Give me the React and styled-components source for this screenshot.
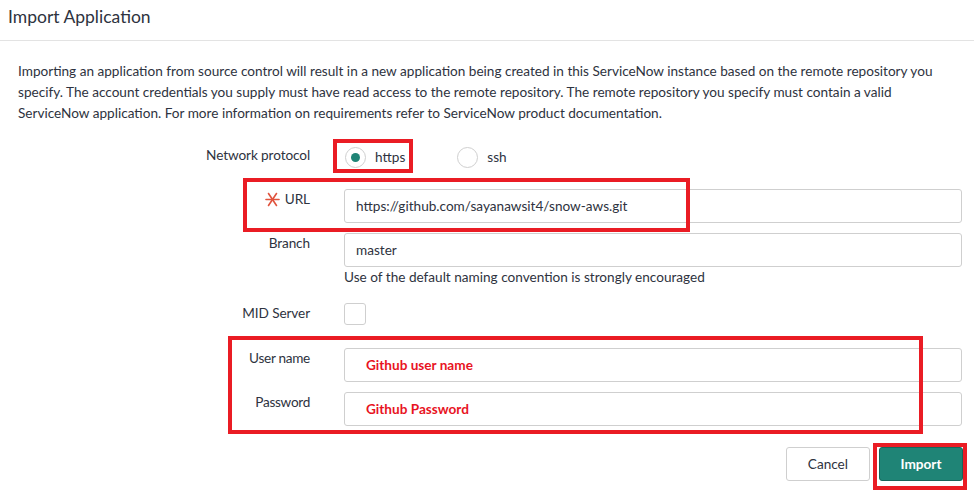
import { createGlobalStyle, styled } from 'styled-components';

const GlobalStyle = createGlobalStyle`
  body {
    margin: 0;
    background: #fff;
    font-family: Lato, "Noto Sans", sans-serif;
    color: #2e3340;
  }
`;

const ANNOTATIONS = [
  { left: 333, top: 139, width: 80, height: 34 },
  { left: 243, top: 178, width: 447, height: 54 },
  { left: 228, top: 336, width: 695, height: 98 },
  { left: 873, top: 443, width: 94, height: 47 },
];

const Asterisk = () => (
  <svg width="15" height="15" viewBox="0 0 15 15">
    <g stroke="#e0533d" strokeWidth="1.6" strokeLinecap="round">
      <line x1="1" y1="7.5" x2="14" y2="7.5" />
      <line x1="3.5" y1="1.5" x2="11.5" y2="13.5" />
      <line x1="11.5" y1="1.5" x2="3.5" y2="13.5" />
    </g>
  </svg>
);

const App = () => (
  <Page>
    <GlobalStyle />
    <Header>Import Application</Header>
    <Body>
      <Intro>
        Importing an application from source control will result in a new application being created in this
        ServiceNow instance based on the remote repository you specify. The account credentials you supply must
        have read access to the remote repository. The remote repository you specify must contain a valid
        ServiceNow application. For more information on requirements refer to ServiceNow product documentation.
      </Intro>

      <Form>
        <Row $top={21}>
          <Label>Network protocol</Label>
          <RadioGroup>
            <RadioOption>
              <Radio $checked />
              https
            </RadioOption>
            <RadioOption>
              <Radio />
              ssh
            </RadioOption>
          </RadioGroup>
        </Row>

        <Row $top={20}>
          <Label>
            <Asterisk />
            URL
          </Label>
          <Field>
            <TextInput>https://github.com/sayanawsit4/snow-aws.git</TextInput>
          </Field>
        </Row>

        <Row $top={10}>
          <Label>Branch</Label>
          <Field>
            <TextInput>master</TextInput>
            <Hint>Use of the default naming convention is strongly encouraged</Hint>
          </Field>
        </Row>

        <Row $top={15}>
          <Label>MID Server</Label>
          <Checkbox />
        </Row>

        <Row $top={23}>
          <Label $narrow>User name</Label>
          <Field>
            <TextInput $annotated>Github user name</TextInput>
          </Field>
        </Row>

        <Row $top={10}>
          <Label $narrow>Password</Label>
          <Field>
            <TextInput $annotated>Github Password</TextInput>
          </Field>
        </Row>
      </Form>

      <Actions>
        <Button>Cancel</Button>
        <Button $primary>Import</Button>
      </Actions>
    </Body>

    {ANNOTATIONS.map((box, index) => (
      <Annotation key={index} style={box} />
    ))}
  </Page>
);

const Page = styled.div`
  position: relative;
  width: 974px;
  height: 497px;
  overflow: hidden;
`;

const Header = styled.h1`
  margin: 0;
  height: 41px;
  padding: 6px 8px 0;
  box-sizing: border-box;
  border-bottom: 1px solid #e3e3e3;
  font-size: 17.5px;
  font-weight: 400;
  color: #2e3340;
`;

const Body = styled.div`
  padding: 20px 12px 0 18px;
`;

const Intro = styled.p`
  margin: 0;
  width: 945px;
  font-size: 13.6px;
  line-height: 21px;
  color: #2e3340;
`;

const Form = styled.div`
  display: flex;
  flex-direction: column;
`;

const Row = styled.div`
  display: flex;
  align-items: flex-start;
  margin-top: ${({ $top }) => $top}px;
`;

const Label = styled.div`
  flex: 0 0 292px;
  display: flex;
  align-items: center;
  justify-content: flex-end;
  gap: 5px;
  font-size: 13.6px;
  line-height: 20px;
  color: #2e3340;
  letter-spacing: ${({ $narrow }) => ($narrow ? '-0.3px' : '-0.1px')};
`;

const Field = styled.div`
  flex: 0 0 618px;
  margin-left: 34px;
  display: flex;
  flex-direction: column;
`;

const TextInput = styled.div`
  height: 34px;
  box-sizing: border-box;
  border: 1px solid #cfcfcf;
  border-radius: 3px;
  padding-left: ${({ $annotated }) => ($annotated ? '21px' : '11px')};
  padding-top: 7px;
  font-size: 13.6px;
  font-weight: ${({ $annotated }) => ($annotated ? 700 : 400)};
  color: ${({ $annotated }) => ($annotated ? '#e8141f' : '#2e3340')};
  line-height: 18px;
`;

const Hint = styled.div`
  font-size: 13.6px;
  line-height: 21px;
  color: #2e3340;
`;

const RadioGroup = styled.div`
  display: flex;
  gap: 51px;
  margin-left: 34px;
`;

const RadioOption = styled.label`
  display: flex;
  align-items: center;
  gap: 9px;
  font-size: 13.6px;
  line-height: 24px;
  margin-left: 1px;
`;

const Radio = styled.span`
  width: 21px;
  height: 21px;
  box-sizing: border-box;
  border-radius: 50%;
  border: 1px solid #cfcfcf;
  display: flex;
  align-items: center;
  justify-content: center;

  &::after {
    content: '';
    width: 9px;
    height: 9px;
    border-radius: 50%;
    background: ${({ $checked }) => ($checked ? '#1f8476' : 'transparent')};
  }
`;

const Checkbox = styled.span`
  width: 22px;
  height: 22px;
  box-sizing: border-box;
  margin-left: 34px;
  border: 1px solid #cfcfcf;
  border-radius: 3px;
`;

const Actions = styled.div`
  display: flex;
  justify-content: flex-end;
  gap: 9px;
  margin-top: 21px;
  width: 945px;
`;

const Button = styled.button`
  height: 34px;
  padding: 0 ${({ $primary }) => ($primary ? '19px' : '21px')};
  min-width: ${({ $primary }) => ($primary ? '84px' : '82px')};
  border-radius: 3px;
  border: 1px solid ${({ $primary }) => ($primary ? '#17665b' : '#cfcfcf')};
  background: ${({ $primary }) => ($primary ? '#1f8476' : '#fff')};
  color: ${({ $primary }) => ($primary ? '#fff' : '#2e3340')};
  font-family: inherit;
  font-size: 13.6px;
  font-weight: ${({ $primary }) => ($primary ? 700 : 400)};
`;

const Annotation = styled.div`
  position: absolute;
  box-sizing: border-box;
  border: 4px solid #ea1c24;
  pointer-events: none;
`;

export default App;
